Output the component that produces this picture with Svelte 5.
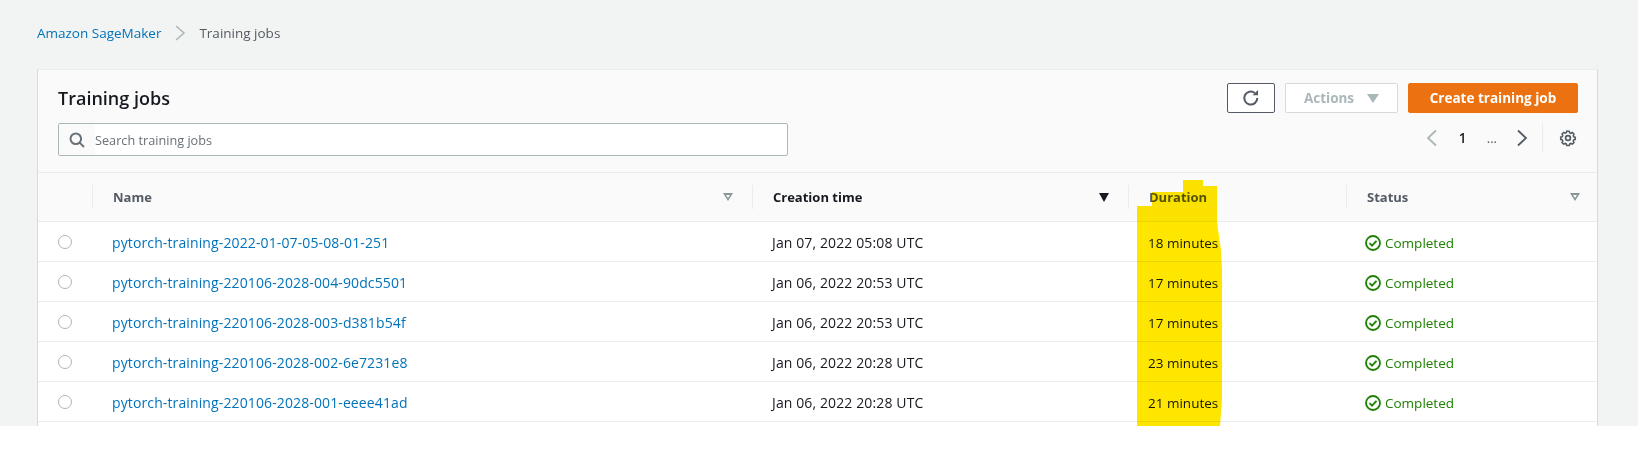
<script>
  const jobs = [
    { name: 'pytorch-training-2022-01-07-05-08-01-251', created: 'Jan 07, 2022 05:08 UTC', duration: '18 minutes' },
    { name: 'pytorch-training-220106-2028-004-90dc5501', created: 'Jan 06, 2022 20:53 UTC', duration: '17 minutes' },
    { name: 'pytorch-training-220106-2028-003-d381b54f', created: 'Jan 06, 2022 20:53 UTC', duration: '17 minutes' },
    { name: 'pytorch-training-220106-2028-002-6e7231e8', created: 'Jan 06, 2022 20:28 UTC', duration: '23 minutes' },
    { name: 'pytorch-training-220106-2028-001-eeee41ad', created: 'Jan 06, 2022 20:28 UTC', duration: '21 minutes' }
  ];
</script>

<div class="page">
  <nav class="crumbs">
    <a href="#sagemaker">Amazon SageMaker</a>
    <svg class="crumb-sep" width="12" height="16" viewBox="0 0 12 16"><path d="M2 1l8 7-8 7" /></svg>
    <span>Training jobs</span>
  </nav>

  <section class="card">
    <header class="head">
      <div class="head-left">
        <h1>Training jobs</h1>
        <div class="search">
          <span class="search-icon">
            <svg width="16" height="16" viewBox="0 0 16 16"><circle cx="6.800" cy="6.800" r="5.300" /><path d="M10.600 10.600L15 15" /></svg>
          </span>
          <input placeholder="Search training jobs" />
        </div>
      </div>
      <div class="head-right">
        <div class="actions">
          <button class="btn refresh" aria-label="Refresh">
            <svg width="18" height="18" viewBox="0 0 16 16"><path d="M13.600 8a5.800 5.800 0 1 1-2.200-4.500" /><path class="solid" d="M9.400 5.600L14.200 5.600 14.200 0.900z" /></svg>
          </button>
          <button class="btn disabled">Actions <i class="caret"></i></button>
          <button class="btn primary">Create training job</button>
        </div>
        <div class="pager">
          <svg class="chev off" width="12" height="18" viewBox="0 0 12 18"><path d="M10 1.500L2 9l8 7.500" /></svg>
          <b>1</b>
          <span class="dots">...</span>
          <svg class="chev" width="12" height="18" viewBox="0 0 12 18"><path d="M2 1.500L10 9l-8 7.500" /></svg>
          <span class="pager-sep"></span>
          <svg class="gear" width="18" height="18" viewBox="0 0 18 18">
            <circle cx="9" cy="9" r="2.400" />
            <path d="M9 2.200l1.300.1.600 1.700 1.200.5 1.600-.8 1.800 1.800-.8 1.600.5 1.200 1.700.6v2.200l-1.700.6-.5 1.200.8 1.600-1.800 1.800-1.600-.8-1.200.5-.6 1.700H7.700l-.6-1.700-1.200-.5-1.600.8-1.800-1.800.8-1.600-.5-1.200-1.700-.6V8.700l1.700-.6.5-1.200-.8-1.600 1.800-1.800 1.600.8 1.200-.5.6-1.700z" transform="translate(9 9) scale(.92) translate(-9 -9.600)" />
          </svg>
        </div>
      </div>
    </header>

    <table>
      <colgroup>
        <col class="c-radio" /><col class="c-name" /><col class="c-time" /><col class="c-dur" /><col />
      </colgroup>
      <thead>
        <tr>
          <th></th>
          <th><div class="th">Name <i class="sort"></i></div></th>
          <th class="dark"><div class="th">Creation time <i class="sort on"></i></div></th>
          <th><div class="th">Duration</div></th>
          <th><div class="th last">Status <i class="sort"></i></div></th>
        </tr>
      </thead>
      <tbody>
        {#each jobs as job}
          <tr>
            <td><span class="radio"></span></td>
            <td class="wide"><a href="#job">{job.name}</a></td>
            <td class="wide">{job.created}</td>
            <td>{job.duration}</td>
            <td>
              <span class="status">
                <svg width="16" height="16" viewBox="0 0 16 16"><circle cx="8" cy="8" r="7" /><path d="M4.500 8.200l2.500 2.500 4.500-4.800" /></svg>
                Completed
              </span>
            </td>
          </tr>
        {/each}
      </tbody>
    </table>
  </section>

  <svg class="marker" width="1638" height="456" viewBox="0 0 1638 456">
    <polygon points="1137,206 1152,206 1152,192 1183,192 1183,180 1203,180 1203,186 1217,186 1217,222 1221,250 1222,270 1222,400 1220,426 1137,426" />
  </svg>
</div>

<style>
  :global(body) {
    background: #fff;
  }

  .page {
    position: relative;
    height: 426px;
    overflow: hidden;
    background: #f2f3f3;
    padding: 23px 40px 0 37px;
    box-sizing: border-box;
    font-family: "Open Sans", "Liberation Sans", sans-serif;
    font-size: 13.5px;
    color: #16191f;
  }

  .crumbs {
    display: flex;
    align-items: center;
    gap: 13px;
    height: 20px;
    color: #545b64;
  }

  .crumbs a, td a {
    color: #0073bb;
    text-decoration: none;
  }

  .crumb-sep path {
    fill: none;
    stroke: #aab7b8;
    stroke-width: 1.500;
  }

  .card {
    margin-top: 26px;
    background: #fff;
    border: 1px solid #d5dbdb;
    border-top-color: #eaeded;
    border-bottom: 0;
    height: 400px;
  }

  .head {
    display: flex;
    justify-content: space-between;
    height: 103px;
    box-sizing: border-box;
    padding: 13px 19px 0 20px;
    background: #fafafa;
    border-bottom: 1px solid #eaeded;
  }

  h1 {
    margin: 0 0 10px;
    height: 30px;
    line-height: 30px;
    font-size: 18px;
    font-weight: 600;
  }

  .search {
    display: flex;
    width: 730px;
    height: 33px;
    box-sizing: border-box;
    border: 1px solid #aab7b8;
    border-radius: 2px;
    background: #fff;
  }

  .search-icon {
    width: 36px;
    display: flex;
    align-items: center;
    justify-content: center;
    background: #fafafa;
  }

  .search-icon svg {
    fill: none;
    stroke: #687078;
    stroke-width: 2;
  }

  input {
    flex: 1;
    border: 0;
    outline: 0;
    background: transparent;
    padding: 0;
    font: 12.7px "Open Sans", sans-serif;
  }

  input::placeholder {
    color: #687078;
  }

  .head-right {
    display: flex;
    flex-direction: column;
    align-items: flex-end;
  }

  .actions {
    display: flex;
    gap: 10px;
  }

  .btn {
    height: 30px;
    box-sizing: border-box;
    border-radius: 2px;
    background: #fff;
    font: 700 13.500px "Open Sans", sans-serif;
    padding: 0;
    display: flex;
    align-items: center;
    justify-content: center;
  }

  .refresh {
    width: 48px;
    border: 1px solid #545b64;
  }

  .refresh svg {
    fill: none;
    stroke: #545b64;
    stroke-width: 1.800;
  }

  .refresh .solid {
    fill: #545b64;
    stroke: none;
  }

  .disabled {
    width: 113px;
    gap: 13px;
    border: 1px solid #d5dbdb;
    color: #aab7b8;
  }

  .caret {
    border-left: 6px solid transparent;
    border-right: 6px solid transparent;
    border-top: 9px solid #aab7b8;
  }

  .primary {
    width: 170px;
    border: 1px solid #ec7211;
    background: #ec7211;
    color: #fff;
  }

  .pager {
    display: flex;
    align-items: center;
    height: 30px;
    margin: 10px 1px 0 0;
  }

  .chev path {
    fill: none;
    stroke: #545b64;
    stroke-width: 1.800;
  }

  .chev.off path {
    stroke: #aab7b8;
  }

  .pager b {
    margin-left: 21px;
    width: 8px;
    font-weight: 600;
  }

  .dots {
    margin: 0 19px 0 20px;
    color: #545b64;
    font-size: 13px;
  }

  .pager-sep {
    width: 1px;
    height: 30px;
    margin: 0 16px 0 14px;
    background: #eaeded;
  }

  .gear {
    fill: none;
    stroke: #545b64;
    stroke-width: 1.700;
  }

  table {
    width: 100%;
    table-layout: fixed;
    border-collapse: collapse;
  }

  .c-radio { width: 54px; }
  .c-name { width: 660px; }
  .c-time { width: 376px; }
  .c-dur { width: 218px; }

  th {
    height: 48px;
    padding: 0;
    background: #fafafa;
    border-bottom: 1px solid #eaeded;
    text-align: left;
    font-size: 13px;
    font-weight: 700;
    color: #545b64;
  }

  th.dark {
    color: #16191f;
  }

  .th {
    display: flex;
    align-items: center;
    justify-content: space-between;
    height: 24px;
    padding: 0 19px 0 20px;
    border-left: 1px solid #eaeded;
  }

  .th.last {
    padding-right: 17px;
  }

  .sort {
    width: 0;
    height: 0;
    border-left: 5px solid transparent;
    border-right: 5px solid transparent;
    border-top: 8px solid #879596;
    position: relative;
  }

  .sort::after {
    content: "";
    position: absolute;
    left: -2px;
    top: -6px;
    border-left: 2px solid transparent;
    border-right: 2px solid transparent;
    border-top: 3px solid #fafafa;
  }

  .sort.on {
    border-top-color: #16191f;
    border-top-width: 9px;
  }

  .sort.on::after {
    display: none;
  }

  td {
    height: 40px;
    padding: 2px 0 0 20px;
    box-sizing: border-box;
    border-bottom: 1px solid #eaeded;
    color: #16191f;
    white-space: nowrap;
  }

  td.wide {
    font-size: 14px;
    letter-spacing: 0.12px;
  }

  td:first-child {
    padding: 0 0 0 20px;
  }

  .radio {
    display: block;
    width: 14px;
    height: 14px;
    box-sizing: border-box;
    border: 1px solid #aab7b8;
    border-radius: 50%;
  }

  .status {
    display: flex;
    align-items: center;
    gap: 4px;
    margin-left: -1px;
    color: #1d8102;
  }

  .status svg {
    fill: none;
    stroke: #1d8102;
    stroke-width: 1.800;
  }

  .marker {
    position: absolute;
    left: 0;
    top: 0;
    pointer-events: none;
    mix-blend-mode: multiply;
  }

  .marker polygon {
    fill: #ffe600;
  }
</style>
